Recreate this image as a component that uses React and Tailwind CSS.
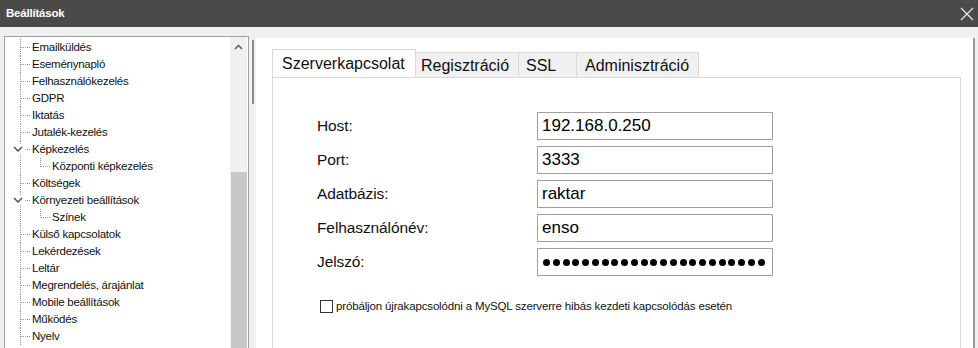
import React from 'react';

const treeItems = [
  { label: 'Emailküldés', level: 0 },
  { label: 'Eseménynapló', level: 0 },
  { label: 'Felhasználókezelés', level: 0 },
  { label: 'GDPR', level: 0 },
  { label: 'Iktatás', level: 0 },
  { label: 'Jutalék-kezelés', level: 0 },
  { label: 'Képkezelés', level: 0, open: true },
  { label: 'Központi képkezelés', level: 1, last: true },
  { label: 'Költségek', level: 0 },
  { label: 'Környezeti beállítások', level: 0, open: true },
  { label: 'Színek', level: 1, last: true },
  { label: 'Külső kapcsolatok', level: 0 },
  { label: 'Lekérdezések', level: 0 },
  { label: 'Leltár', level: 0 },
  { label: 'Megrendelés, árajánlat', level: 0 },
  { label: 'Mobile beállítások', level: 0 },
  { label: 'Működés', level: 0 },
  { label: 'Nyelv', level: 0 },
];

const fields = [
  { label: 'Host:', value: '192.168.0.250' },
  { label: 'Port:', value: '3333' },
  { label: 'Adatbázis:', value: 'raktar' },
  { label: 'Felhasználónév:', value: 'enso' },
  { label: 'Jelszó:', password: true },
];

const tabs = [
  { label: 'Szerverkapcsolat', w: 'w-[144px]', pl: 'pl-[9px]', active: true },
  { label: 'Regisztráció', w: 'w-[103px]', pl: 'pl-[5px]' },
  { label: 'SSL', w: 'w-[58px]', pl: 'pl-[7px]' },
  { label: 'Adminisztráció', w: 'w-[122px]', pl: 'pl-[8px]' },
];

const dot = '#9a9a9a';

const Connector = ({ level, open }) => {
  if (level === 1) {
    return (
      <svg width="46" height="17" className="shrink-0">
        <line x1="15.5" y1="0" x2="15.5" y2="17" stroke={dot} strokeDasharray="1 1" />
        <line x1="35.5" y1="0" x2="35.5" y2="9" stroke={dot} strokeDasharray="1 1" />
        <line x1="36" y1="8.5" x2="45" y2="8.5" stroke={dot} strokeDasharray="1 1" />
      </svg>
    );
  }
  if (open) {
    return (
      <svg width="26" height="17" className="shrink-0">
        <line x1="15.5" y1="0" x2="15.5" y2="3" stroke={dot} strokeDasharray="1 1" />
        <line x1="15.5" y1="13" x2="15.5" y2="17" stroke={dot} strokeDasharray="1 1" />
        <polyline points="9,6 13,10 17,6" fill="none" stroke="#444" strokeWidth="1.3" />
        <line x1="20" y1="8.5" x2="25" y2="8.5" stroke={dot} strokeDasharray="1 1" />
      </svg>
    );
  }
  return (
    <svg width="26" height="17" className="shrink-0">
      <line x1="15.5" y1="0" x2="15.5" y2="17" stroke={dot} strokeDasharray="1 1" />
      <line x1="16" y1="8.5" x2="25" y2="8.5" stroke={dot} strokeDasharray="1 1" />
    </svg>
  );
};

const App = () => {
  return (
    <div
      className="w-[978px] h-[348px] overflow-hidden bg-[#f0f0f0] flex flex-col"
      style={{ fontFamily: '"Liberation Sans", Arial, sans-serif' }}
    >
      {/* title bar */}
      <div className="h-[27px] shrink-0 bg-[#4b4a48] flex items-center justify-between pl-[6px] pr-[4px]">
        <span className="text-white text-[11.5px] font-bold tracking-[-0.2px]">Beállítások</span>
        <svg width="14" height="14" viewBox="0 0 14 14">
          <path d="M1 1 L13 13 M13 1 L1 13" stroke="#e8e8e8" strokeWidth="1.2" />
        </svg>
      </div>

      <div className="flex-1 flex pt-[9px] pl-[4px] min-h-0">
        {/* tree panel */}
        <div className="w-[245px] shrink-0 bg-white border border-[#a0a0a0] border-b-0 flex">
          <div className="flex-1 pt-[2px] flex flex-col">
            {treeItems.map((it) => (
              <div key={it.label} className="h-[17px] flex items-center shrink-0">
                <Connector level={it.level} open={it.open} />
                <span className="text-[11.5px] tracking-[-0.25px] text-[#111] leading-none ml-[1px] whitespace-nowrap">
                  {it.label}
                </span>
              </div>
            ))}
          </div>
          <div className="w-[17px] mr-[1px] bg-[#f0f0f0] flex flex-col">
            <div className="h-[17px] flex items-center justify-center pt-[2px]">
              <svg width="9" height="6" viewBox="0 0 9 6">
                <polyline points="1,5 4.5,1.5 8,5" fill="none" stroke="#555" strokeWidth="1.4" />
              </svg>
            </div>
            <div className="h-[118px]" />
            <div className="flex-1 bg-[#c8c8c8] ml-[1px]" />
          </div>
        </div>

        {/* splitter */}
        <div className="w-[7px] shrink-0 flex justify-center pt-[2px]">
          <div className="w-[2px] h-[64px] bg-[#8c8c8c] mt-[2px]" />
        </div>

        {/* right panel */}
        <div className="w-[719px] shrink-0 mt-[2px] bg-white border-r-2 border-[#9a9a9a] pl-[16px] pr-[12px] pt-[11px] flex flex-col">
          <div className="flex items-end h-[29px] shrink-0">
            {tabs.map((t) => (
              <div
                key={t.label}
                className={`${t.w} ${t.pl} flex items-center text-[16px] text-[#111] whitespace-nowrap border-t border-r border-[#d9d9d9] ${
                  t.active ? 'h-[29px] bg-white border-l' : 'h-[26px] bg-[#f0f0f0]'
                }`}
              >
                {t.label}
              </div>
            ))}
          </div>
          <div className="flex-1 border border-b-0 border-[#d9d9d9] -mt-px pl-[44px] pt-[34px]">
            <div className="flex flex-col gap-[6px]">
              {fields.map((f) => (
                <div key={f.label} className="flex items-center h-[28px]">
                  <div className="w-[220px] text-[15.5px] tracking-[-0.1px] text-[#111]">{f.label}</div>
                  <div className="w-[236px] h-[28px] border border-[#a0a0a0] flex items-center pl-[4px] text-[17px] text-black">
                    {f.password ? (
                      <div className="flex gap-[2.75px] pl-[1px]">
                        {Array.from({ length: 23 }).map((_, i) => (
                          <span key={i} className="w-[7px] h-[7px] rounded-full bg-black" />
                        ))}
                      </div>
                    ) : (
                      f.value
                    )}
                  </div>
                </div>
              ))}
            </div>
            <div className="flex items-center mt-[22px] ml-[3px]">
              <div className="w-[13px] h-[13px] border border-[#333] bg-white" />
              <span className="ml-[3px] text-[11.5px] tracking-[-0.15px] text-[#111]">
                próbáljon újrakapcsolódni a MySQL szerverre hibás kezdeti kapcsolódás esetén
              </span>
            </div>
          </div>
        </div>
      </div>
    </div>
  );
};

export default App;
